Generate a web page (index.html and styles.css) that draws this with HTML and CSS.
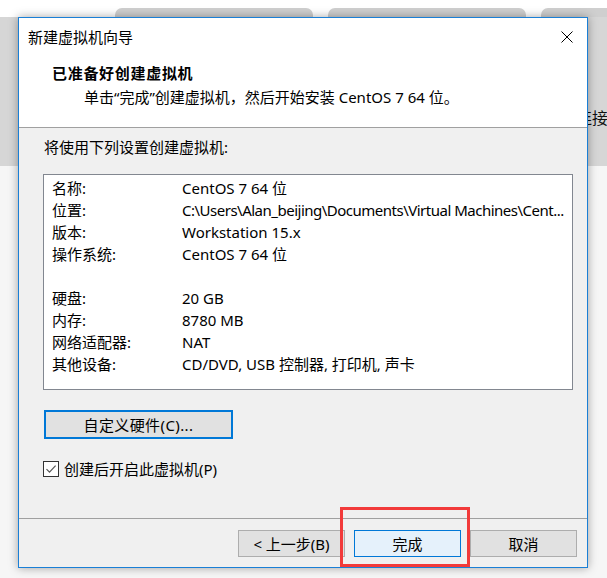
FILE: index.html
```html
<!DOCTYPE html>
<html lang="zh-CN">
<head>
<meta charset="utf-8">
<title>新建虚拟机向导</title>
<link rel="stylesheet" href="styles.css">
</head>
<body>
<div class="desktop">
  <div class="tabs">
    <div class="tab"></div>
    <div class="tab"></div>
    <div class="tab tab-last"></div>
  </div>
  <div class="bghead"><span class="bgtext">连接</span></div>
  <div class="bgbody"></div>
</div>

<div class="dialog">
  <div class="header">
    <div class="titlebar">
      <span class="title">新建虚拟机向导</span>
      <svg class="close" width="12" height="12" viewBox="0 0 12 12"><path d="M0.5 0.5 L11.5 11.5 M11.5 0.5 L0.5 11.5" stroke="#000" stroke-width="1" fill="none"/></svg>
    </div>
    <div class="heading">已准备好创建虚拟机</div>
    <div class="subtitle">单击“完成”创建虚拟机，然后开始安装 CentOS 7 64 位。</div>
  </div>

  <div class="content">
    <div class="intro">将使用下列设置创建虚拟机:</div>
    <div class="listbox">
      <div class="row"><span class="label">名称:</span><span class="value">CentOS 7 64 位</span></div>
      <div class="row"><span class="label">位置:</span><span class="value value-path">C:\Users\Alan_beijing\Documents\Virtual Machines\Cent...</span></div>
      <div class="row"><span class="label">版本:</span><span class="value">Workstation 15.x</span></div>
      <div class="row"><span class="label">操作系统:</span><span class="value">CentOS 7 64 位</span></div>
      <div class="row"></div>
      <div class="row"><span class="label">硬盘:</span><span class="value">20 GB</span></div>
      <div class="row"><span class="label">内存:</span><span class="value">8780 MB</span></div>
      <div class="row"><span class="label">网络适配器:</span><span class="value">NAT</span></div>
      <div class="row"><span class="label">其他设备:</span><span class="value">CD/DVD, USB 控制器, 打印机, 声卡</span></div>
    </div>
    <div class="btn btn-custom">自定义硬件(C)...</div>
    <div class="checkrow">
      <svg class="checkbox" width="16" height="16" viewBox="0 0 16 16"><rect x="0.5" y="0.5" width="15" height="15" fill="#fff" stroke="#333"/><path d="M3.5 8.2 L6.5 11.2 L12.6 4.6" stroke="#555" stroke-width="1.2" fill="none"/></svg>
      <span class="checklabel">创建后开启此虚拟机(P)</span>
    </div>
  </div>

  <div class="footer">
    <div class="btn btn-foot">&lt; 上一步(B)</div>
    <div class="btn btn-foot btn-default">完成</div>
    <div class="btn btn-foot">取消</div>
  </div>

  <div class="highlight"></div>
</div>
</body>
</html>
```

FILE: styles.css
```css
html, body {
  margin: 0;
  padding: 0;
}

body {
  width: 607px;
  height: 578px;
  overflow: hidden;
  position: relative;
  background: #ffffff;
  font-family: "Noto Sans", "Noto Sans CJK SC", sans-serif;
  font-size: 15px;
  color: #000;
}

/* background window */
.desktop {
  width: 607px;
  height: 578px;
}

.tabs {
  display: flex;
  gap: 15px;
  padding: 8px 0 0 115px;
  height: 9px;
}

.tab {
  width: 198px;
  flex: none;
  background: #cfcfcf;
  border-radius: 7px 7px 0 0;
}

.tab-last {
  width: 90px;
}

.bghead {
  height: 149px;
  background: #d6d6d6;
  padding: 0 0 0 576px;
  box-sizing: border-box;
}

.bgtext {
  display: block;
  padding-top: 90px;
  font-family: "Noto Sans CJK SC", sans-serif;
  font-size: 16px;
  line-height: 20px;
  white-space: nowrap;
  color: #111;
}

.bgbody {
  height: 412px;
  background: #f6f6f6;
}

/* dialog */
.dialog {
  position: absolute;
  left: 18px;
  top: 17px;
  width: 570px;
  height: 551px;
  box-sizing: border-box;
  border: 1px solid #1a7fd6;
  background: #f0f0f0;
  box-shadow: 0 0 9px rgba(0, 0, 0, 0.35);
  display: flex;
  flex-direction: column;
}

.header {
  background: #fff;
  height: 109px;
  border-bottom: 1px solid #a0a0a0;
  flex: none;
}

.titlebar {
  height: 38px;
  display: flex;
  align-items: center;
  justify-content: space-between;
  padding: 0 14px 0 9px;
}

.title {
  line-height: 20px;
  font-family: "Noto Sans CJK SC", sans-serif;
}

.close {
  display: block;
}

.heading {
  margin-top: 7px;
  padding-left: 33px;
  line-height: 20px;
  font-family: "Noto Sans CJK SC", sans-serif;
  font-weight: bold;
  letter-spacing: 0.7px;
}

.subtitle {
  margin-top: 4px;
  padding-left: 65px;
  line-height: 20px;
  white-space: nowrap;
}

.content {
  height: 391px;
  flex: none;
  padding: 9px 0 0 24px;
  box-sizing: border-box;
  border-bottom: 1px solid #a0a0a0;
}

.intro {
  padding-left: 1px;
  line-height: 20px;
}

.listbox {
  margin-top: 17px;
  width: 530px;
  height: 216px;
  box-sizing: border-box;
  border: 1px solid #828790;
  background: #fff;
  padding: 2px 8px 0 8px;
}

.row {
  display: flex;
  height: 22px;
  line-height: 22px;
  white-space: nowrap;
}

.label {
  width: 130px;
  flex: none;
}

.value {
  flex: 1;
  min-width: 0;
}

.value-path {
  letter-spacing: -0.5px;
}

.btn {
  box-sizing: border-box;
  display: flex;
  align-items: center;
  justify-content: center;
  background: #e1e1e1;
  border: 1px solid #adadad;
  line-height: 20px;
  white-space: nowrap;
}

.btn-custom {
  margin: 20px 0 0 1px;
  width: 189px;
  height: 29px;
  border: 2px solid #0078d7;
  letter-spacing: 0.4px;
}

.checkrow {
  margin-top: 20px;
  height: 20px;
  display: flex;
  align-items: center;
  gap: 5px;
}

.checkbox {
  display: block;
  flex: none;
}

.checklabel {
  line-height: 20px;
}

.footer {
  flex: 1;
  display: flex;
  justify-content: flex-end;
  gap: 9px;
  padding: 11px 10px 0 0;
  box-sizing: border-box;
}

.btn-foot {
  width: 107px;
  height: 27px;
}

.btn-default {
  background: #e5f1fb;
  border-color: #0078d7;
}

.highlight {
  position: absolute;
  left: 321px;
  top: 489px;
  width: 130px;
  height: 60px;
  box-sizing: border-box;
  border: 3px solid #f23a3a;
}
```
